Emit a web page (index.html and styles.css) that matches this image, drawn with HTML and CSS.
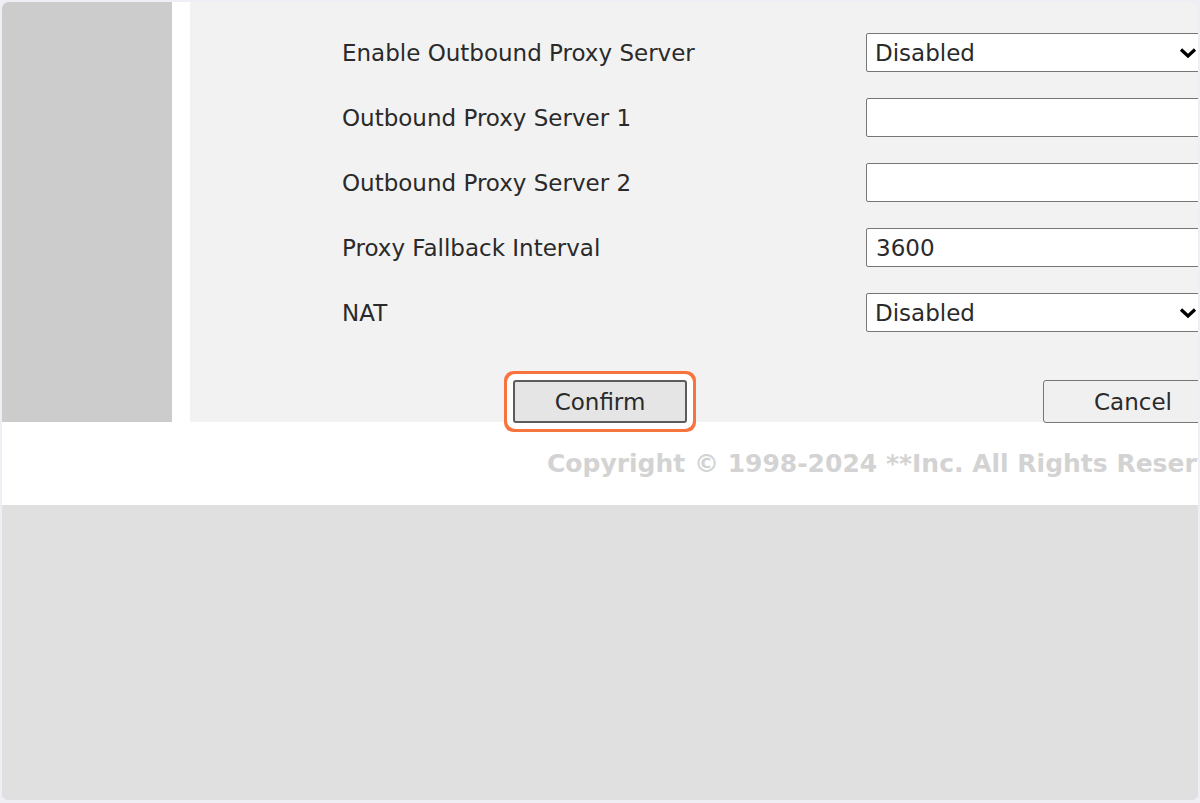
FILE: index.html
```html
<!DOCTYPE html>
<html lang="en">
<head>
<meta charset="utf-8">
<title>Proxy Settings</title>
<link rel="stylesheet" href="styles.css">
</head>
<body>
<div class="frame">
  <div class="main">
    <aside class="sidebar"></aside>
    <div class="spacer"></div>
    <section class="panel">
      <form class="form">
        <div class="row">
          <label class="label">Enable Outbound Proxy Server</label>
          <div class="select-wrap">
            <select class="field select"><option>Disabled</option><option>Enabled</option></select>
            <svg class="chev" width="18" height="12" viewBox="0 0 18 12"><path d="M2 2.5 L9 9 L16 2.5" fill="none" stroke="#000" stroke-width="3.2"/></svg>
          </div>
        </div>
        <div class="row">
          <label class="label">Outbound Proxy Server 1</label>
          <input class="field" type="text" value="">
        </div>
        <div class="row">
          <label class="label">Outbound Proxy Server 2</label>
          <input class="field" type="text" value="">
        </div>
        <div class="row">
          <label class="label">Proxy Fallback Interval</label>
          <input class="field" type="text" value="3600">
        </div>
        <div class="row">
          <label class="label">NAT</label>
          <div class="select-wrap">
            <select class="field select"><option>Disabled</option><option>Enabled</option></select>
            <svg class="chev" width="18" height="12" viewBox="0 0 18 12"><path d="M2 2.5 L9 9 L16 2.5" fill="none" stroke="#000" stroke-width="3.2"/></svg>
          </div>
        </div>
        <div class="buttons">
          <button type="button" class="btn btn-confirm">Confirm</button>
          <button type="button" class="btn btn-cancel">Cancel</button>
        </div>
      </form>
    </section>
  </div>
  <footer class="footer">Copyright © 1998-2024 **Inc. All Rights Reserved.</footer>
  <div class="rest"></div>
</div>
</body>
</html>
```

FILE: styles.css
```css
html, body {
  margin: 0;
  padding: 0;
  height: 100%;
}
body {
  background: #eeeef4;
  font-family: "DejaVu Sans", Verdana, sans-serif;
}
.frame {
  margin: 2px;
  height: 798px;
  width: 1196px;
  border-radius: 7px;
  overflow: hidden;
  background: #e0e0e0;
  display: flex;
  flex-direction: column;
}
.main {
  display: flex;
  height: 420px;
  flex: none;
}
.sidebar {
  width: 170px;
  background: #cccccc;
  flex: none;
}
.spacer {
  width: 18px;
  background: #ffffff;
  flex: none;
}
.panel {
  flex: 1;
  background: #f2f2f2;
  position: relative;
  z-index: 1;
}
.form {
  padding: 31px 0 0 152px;
  display: flex;
  flex-direction: column;
  gap: 26px;
}
.row {
  display: flex;
  align-items: center;
  height: 39px;
}
.label {
  width: 524px;
  flex: none;
  font-size: 23px;
  color: #2a2a2a;
}
.field {
  box-sizing: border-box;
  width: 345px;
  height: 39px;
  border: 1px solid #767676;
  border-radius: 2px;
  background: #fff;
  font-family: "DejaVu Sans", Verdana, sans-serif;
  font-size: 23px;
  color: #2a2a2a;
  padding: 0 0 0 9px;
  margin: 0;
  outline: none;
}
.select-wrap {
  position: relative;
  width: 345px;
  height: 39px;
}
.select {
  appearance: none;
  -webkit-appearance: none;
  padding-left: 8px;
}
.chev {
  position: absolute;
  right: 14px;
  top: 14px;
  pointer-events: none;
}
.buttons {
  display: flex;
  align-items: center;
  margin-top: 22px;
  padding-left: 171px;
}
.btn {
  box-sizing: border-box;
  height: 43px;
  font-family: "DejaVu Sans", Verdana, sans-serif;
  font-size: 23px;
  color: #2a2a2a;
  border: 2px solid #707070;
  border-radius: 3px;
  padding: 0;
}
.btn-confirm {
  width: 174px;
  background: #e5e5e5;
  box-shadow: 0 0 0 6px #ffffff, 0 0 0 9px #f7743f;
  border-color: #5c5c5c;
}
.btn-cancel {
  width: 180px;
  margin-left: 356px;
  background: #f0f0f0;
  border-width: 1px;
  border-color: #767676;
}
.footer {
  height: 83px;
  flex: none;
  background: #ffffff;
  box-sizing: border-box;
  padding-left: 545px;
  line-height: 83px;
  font-size: 25px;
  font-weight: bold;
  color: #d3d3d3;
  white-space: nowrap;
}
.rest {
  flex: 1;
  background: #e0e0e0;
}
```
